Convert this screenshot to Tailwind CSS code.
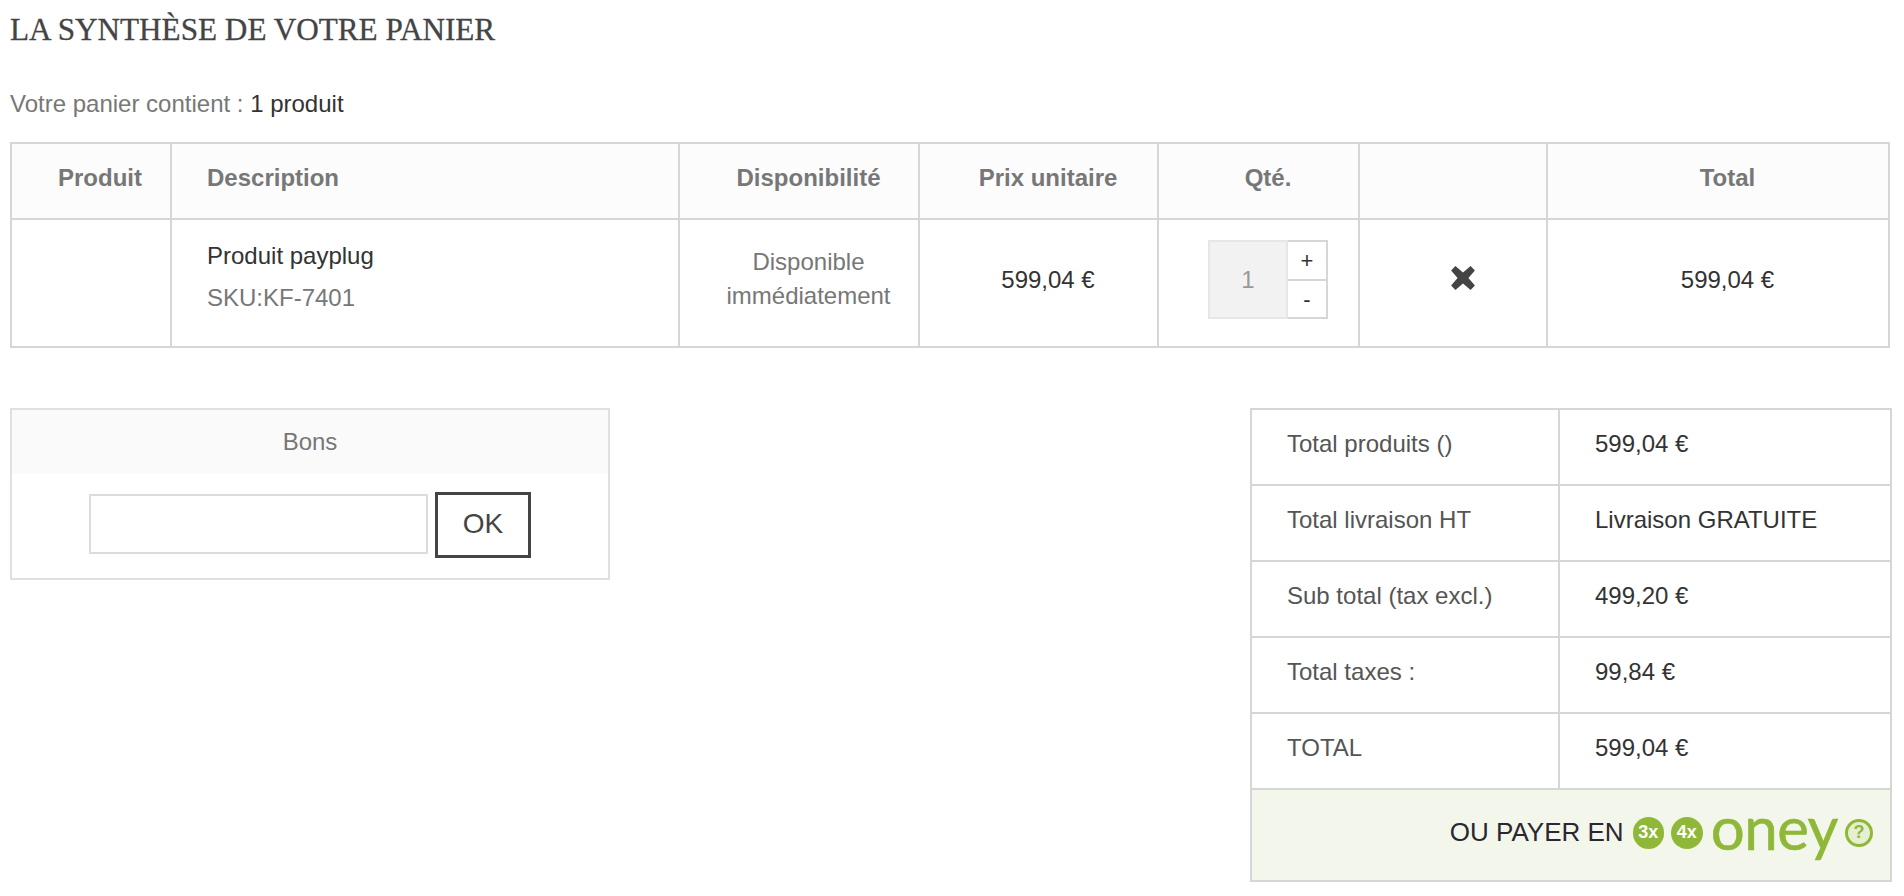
<!DOCTYPE html>
<html lang="fr">
<head>
<meta charset="utf-8">
<script src="https://cdn.jsdelivr.net/npm/@tailwindcss/browser@4"></script>
<title>Panier</title>
</head>
<body class="bg-white font-['Liberation_Sans',Arial,sans-serif] text-[24px] text-[#777] h-[896px] overflow-hidden">
<div class="px-[10px]">
  <h1 class="font-['Liberation_Serif',serif] text-[31.2px] leading-[40px] pt-[10px] text-[#444] font-normal whitespace-nowrap [-webkit-text-stroke:0.3px_#444]">LA SYNTHÈSE DE VOTRE PANIER</h1>
  <p class="mt-[40px] leading-[28px] whitespace-nowrap">Votre panier contient : <span class="text-[#333]">1 produit</span></p>

  <table class="mt-[24px] w-[1880px] table-fixed border-collapse">
    <colgroup>
      <col class="w-[160px]"><col class="w-[508px]"><col class="w-[240px]"><col class="w-[239px]"><col class="w-[201px]"><col class="w-[188px]"><col class="w-[342px]">
    </colgroup>
    <thead>
      <tr class="h-[76px] bg-[#fcfcfc] font-bold text-[#777]">
        <th class="border-2 border-[#d6d6d6] text-right pr-[28px] pb-[7px]">Produit</th>
        <th class="border-2 border-[#d6d6d6] text-left pl-[35px] pb-[7px]">Description</th>
        <th class="border-2 border-[#d6d6d6] pl-[19px] pb-[7px]">Disponibilité</th>
        <th class="border-2 border-[#d6d6d6] pl-[19px] pb-[7px]">Prix unitaire</th>
        <th class="border-2 border-[#d6d6d6] pl-[19px] pb-[7px]">Qté.</th>
        <th class="border-2 border-[#d6d6d6]"></th>
        <th class="border-2 border-[#d6d6d6] pl-[19px] pb-[7px]">Total</th>
      </tr>
    </thead>
    <tbody>
      <tr class="h-[128px]">
        <td class="border-2 border-[#d6d6d6]"></td>
        <td class="border-2 border-[#d6d6d6] pl-[35px] align-top pt-[21px]">
          <div class="text-[#333] leading-[30px]">Produit payplug</div>
          <div class="mt-[12px] leading-[30px]">SKU:KF-7401</div>
        </td>
        <td class="border-2 border-[#d6d6d6] text-center leading-[34px] pl-[19px] pb-[8px]">Disponible<br>immédiatement</td>
        <td class="border-2 border-[#d6d6d6] text-center text-[#333] pl-[19px] pb-[6px]">599,04 €</td>
        <td class="border-2 border-[#d6d6d6] pb-[7px]">
          <div class="flex w-[120px] h-[79px] ml-[49px]">
            <div class="w-[80px] h-full bg-[#f2f2f2] border-2 border-[#e6e6e6] flex items-center justify-center text-[#999]">1</div>
            <div class="w-[40px] h-full flex flex-col border-2 border-l-0 border-[#d6d6d6] text-[#333] text-[22px]">
              <div class="h-[39px] flex items-center justify-center border-b-2 border-[#d6d6d6]">+</div>
              <div class="flex-1 flex items-center justify-center">-</div>
            </div>
          </div>
        </td>
        <td class="border-2 border-[#d6d6d6] pl-[19px]">
          <svg class="mx-auto -mt-[10px] block" width="26" height="26" viewBox="0 0 24 24" aria-label="Supprimer"><path d="M5 1 L12 7 L19 1 L23 5 L17 12 L23 19 L19 23 L12 17 L5 23 L1 19 L7 12 L1 5 Z" fill="#444"/></svg>
        </td>
        <td class="border-2 border-[#d6d6d6] text-center text-[#333] pl-[19px] pb-[6px]">599,04 €</td>
      </tr>
    </tbody>
  </table>

  <div class="mt-[60px] flex justify-between items-start pr-[4px]">
    <div class="w-[600px] h-[172px] border-2 border-[#e0e0e0]">
      <div class="h-[64px] bg-[#fafafa] flex items-center justify-center">Bons</div>
      <div class="flex items-center justify-center gap-[7px] pt-[18px]">
        <div class="w-[339px] h-[60px] border-2 border-[#dcdcdc] bg-white -mt-[2px]"></div>
        <div class="w-[96px] h-[66px] border-[3px] border-[#444] flex items-center justify-center text-[#444] text-[28px] pb-[3px]">OK</div>
      </div>
    </div>

    <div class="w-[640px]">
      <table class="w-[640px] table-fixed border-collapse text-[#555]">
        <colgroup><col class="w-[308px]"><col class="w-[332px]"></colgroup>
        <tbody>
          <tr class="h-[76px]"><td class="border-2 border-[#d6d6d6] pl-[35px] pb-[6px]">Total produits ()</td><td class="border-2 border-[#d6d6d6] pl-[35px] text-[#333] pb-[6px]">599,04 €</td></tr>
          <tr class="h-[76px]"><td class="border-2 border-[#d6d6d6] pl-[35px] pb-[6px]">Total livraison HT</td><td class="border-2 border-[#d6d6d6] pl-[35px] text-[#333] pb-[6px]">Livraison GRATUITE</td></tr>
          <tr class="h-[76px]"><td class="border-2 border-[#d6d6d6] pl-[35px] pb-[6px]">Sub total (tax excl.)</td><td class="border-2 border-[#d6d6d6] pl-[35px] text-[#333] pb-[6px]">499,20 €</td></tr>
          <tr class="h-[76px]"><td class="border-2 border-[#d6d6d6] pl-[35px] pb-[6px]">Total taxes :</td><td class="border-2 border-[#d6d6d6] pl-[35px] text-[#333] pb-[6px]">99,84 €</td></tr>
          <tr class="h-[76px]"><td class="border-2 border-[#d6d6d6] pl-[35px] pb-[6px]">TOTAL</td><td class="border-2 border-[#d6d6d6] pl-[35px] text-[#333] pb-[6px]">599,04 €</td></tr>
          <tr class="h-[92px]">
            <td colspan="2" class="border-2 border-[#d6d6d6] bg-[#f3f6ea] p-0">
              <div class="flex items-center justify-end pr-[17px] pb-[5px] h-[90px]">
                <span class="text-[#2b2730] text-[26px] whitespace-nowrap mr-[9px]">OU PAYER EN</span>
                <span class="w-[31px] h-[32px] rounded-full bg-[#8fb838] text-white font-bold text-[18px] flex items-center justify-center">3x</span>
                <span class="w-[32px] h-[32px] rounded-full bg-[#8fb838] text-white font-bold text-[18px] flex items-center justify-center ml-[7px]">4x</span>
                <span class="font-['Lato',sans-serif] text-[#8fb838] text-[60px] leading-[40px] ml-[8px] mr-[1px] pb-[12px] tracking-[-0.5px] [-webkit-text-stroke:0.6px_#8fb838]">oney</span>
                <span class="w-[28px] h-[28px] rounded-full border-[3px] border-[#8fb838] bg-[#e6efd2] text-[#8fb838] font-bold text-[18px] flex items-center justify-center ml-[6px]">?</span>
              </div>
            </td>
          </tr>
        </tbody>
      </table>
    </div>
  </div>
</div>
</body>
</html>
